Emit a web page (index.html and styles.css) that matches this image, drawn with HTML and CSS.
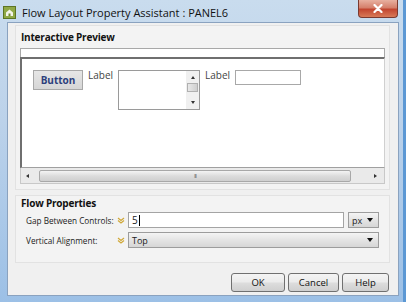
FILE: index.html
```html
<!DOCTYPE html>
<html lang="en">
<head>
  <meta charset="UTF-8">
  <title>Flow Layout Property Assistant : PANEL6</title>
  <link rel="stylesheet" href="styles.css">
</head>
<body>
  <div class="window">
    <div class="titlebar">
      <svg class="app-icon" width="13" height="13" viewBox="0 0 13 13">
        <rect x="0.5" y="0.5" width="12" height="12" fill="#8fa845" stroke="#5c7424"/>
        <path d="M3 10 V6.5 L6.5 3.5 L10 6.5 V10 Z" fill="#f4f4e8"/>
        <rect x="5.5" y="7.5" width="2" height="2.5" fill="#6f8a30"/>
      </svg>
      <span class="title">Flow Layout Property Assistant : PANEL6</span>
      <div class="close-btn">
        <svg width="10" height="9" viewBox="0 0 10 9">
          <path d="M1.5 1 L8.5 8 M8.5 1 L1.5 8" stroke="#fff" stroke-width="2.2" stroke-linecap="round"/>
        </svg>
      </div>
    </div>

    <div class="client">
      <div class="group preview-group">
        <div class="group-title">Interactive Preview</div>
        <div class="strip"></div>
        <div class="preview">
          <div class="fake-button">Button</div>
          <span class="fake-label">Label</span>
          <div class="listbox">
            <div class="vscroll">
              <span class="arrow up"></span>
              <span class="vthumb"></span>
              <span class="arrow down"></span>
            </div>
          </div>
          <span class="fake-label">Label</span>
          <div class="fake-text"></div>
        </div>
        <div class="hscroll">
          <span class="harrow left"></span>
          <div class="hthumb"><span class="grip">III</span></div>
          <span class="harrow right"></span>
        </div>
      </div>

      <div class="group props-group">
        <div class="group-title">Flow Properties</div>
        <div class="prop-row">
          <span class="prop-label">Gap Between Controls:</span>
          <svg class="chev" width="8" height="7" viewBox="0 0 8 7">
            <path d="M1 1 L4 3.5 L7 1 M1 3.5 L4 6 L7 3.5" fill="none" stroke="#d0a838" stroke-width="1.2"/>
          </svg>
          <div class="text-field">5<span class="caret"></span></div>
          <div class="combo unit">px<span class="drop"></span></div>
        </div>
        <div class="prop-row">
          <span class="prop-label">Vertical Alignment:</span>
          <svg class="chev" width="8" height="7" viewBox="0 0 8 7">
            <path d="M1 1 L4 3.5 L7 1 M1 3.5 L4 6 L7 3.5" fill="none" stroke="#d0a838" stroke-width="1.2"/>
          </svg>
          <div class="combo wide">Top<span class="drop"></span></div>
        </div>
      </div>

      <div class="actions">
        <button class="dlg-btn ok">OK</button>
        <button class="dlg-btn cancel">Cancel</button>
        <button class="dlg-btn help">Help</button>
      </div>
    </div>
  </div>
</body>
</html>
```

FILE: styles.css
```css
/* Dialog frame */
body {
  margin: 0;
  font-family: 'Open Sans', 'Noto Sans', sans-serif;
  font-size: 10px;
  color: #222;
}

.window {
  width: 406px;
  height: 302px;
  background: linear-gradient(180deg, #c9dcee 0%, #bcd2ea 40%, #9cc0e6 100%);
  box-sizing: border-box;
  border-right: 3px solid #5c98d4;
  overflow: hidden;
}

.titlebar {
  height: 22px;
  display: flex;
  align-items: center;
  padding-left: 3px;
}

.app-icon {
  margin-top: 3px;
}

.title {
  margin-left: 6px;
  margin-top: 3px;
  font-size: 11px;
  color: #111;
}

.close-btn {
  margin-left: auto;
  margin-right: 5px;
  align-self: flex-start;
  width: 40px;
  height: 18px;
  box-sizing: border-box;
  border: 1px solid #7a3a30;
  border-top: none;
  border-radius: 0 0 4px 4px;
  background: linear-gradient(180deg, #e8b0a0 0%, #d5806c 45%, #c24630 55%, #d87a58 100%);
  display: flex;
  align-items: center;
  justify-content: center;
}

.client {
  margin-left: 7px;
  width: 392px;
  height: 274px;
  box-sizing: border-box;
  background: #f0f0f0;
  border: 1px solid #8aa2bf;
  padding: 2px 8px 0 7px;
  display: flex;
  flex-direction: column;
}

/* Group boxes */
.group {
  width: 375px;
  box-sizing: border-box;
  border: 1px solid #e2e2e2;
  background: #f3f3f3;
  padding: 0 4px;
}

.group-title {
  font-weight: bold;
  color: #111;
  height: 22px;
  line-height: 23px;
  padding-left: 1px;
  letter-spacing: -0.2px;
}

.preview-group {
  height: 165px;
}

.strip {
  height: 8px;
  background: #fff;
  border: 1px solid #a8a8a8;
  border-bottom: none;
}

.preview {
  height: 111px;
  box-sizing: border-box;
  background: #fff;
  border-top: 2px solid #6f6f6f;
  border-left: 2px solid #6f6f6f;
  border-right: 1px solid #d0d0d0;
  border-bottom: 1px solid #a0a0a0;
  padding: 11px 11px;
  display: flex;
  align-items: flex-start;
  gap: 5px;
}

.fake-button {
  width: 50px;
  height: 20px;
  box-sizing: border-box;
  border: 1px solid #a8a8a8;
  background: linear-gradient(180deg, #e6e6e6, #d6d6d6);
  color: #2d3f7c;
  font-weight: bold;
  font-size: 10px;
  display: flex;
  align-items: center;
  justify-content: center;
}

.fake-label {
  color: #444;
  line-height: 12px;
  margin-top: -1px;
}

.listbox {
  width: 82px;
  height: 40px;
  box-sizing: border-box;
  border: 1px solid #9a9a9a;
  display: flex;
  justify-content: flex-end;
}

.vscroll {
  width: 13px;
  background: #f0f0f0;
  display: flex;
  flex-direction: column;
  align-items: center;
}

.arrow {
  width: 0;
  height: 0;
  border-left: 2px solid transparent;
  border-right: 2px solid transparent;
}

.arrow.up {
  border-bottom: 3px solid #333;
  margin-top: 5px;
}

.arrow.down {
  border-top: 3px solid #333;
  margin-top: auto;
  margin-bottom: 5px;
}

.vthumb {
  width: 11px;
  height: 9px;
  margin-top: 4px;
  border: 1px solid #b0b0b0;
  box-sizing: border-box;
  background: linear-gradient(90deg, #e8e8e8, #cfcfcf);
}

.fake-text {
  width: 66px;
  height: 15px;
  box-sizing: border-box;
  border: 1px solid #a8a8a8;
  background: #fff;
}

.hscroll {
  height: 16px;
  box-sizing: border-box;
  border: 1px solid #c8c8c8;
  border-top: none;
  background: #eaeaea;
  display: flex;
  align-items: center;
  padding: 0 2px;
}

.harrow {
  width: 0;
  height: 0;
  border-top: 2px solid transparent;
  border-bottom: 2px solid transparent;
}

.harrow.left {
  border-right: 3px solid #333;
  margin: 0 10px 0 3px;
}

.harrow.right {
  border-left: 3px solid #333;
  margin: 0 5px 0 auto;
}

.hthumb {
  width: 312px;
  height: 12px;
  box-sizing: border-box;
  border: 1px solid #a8a8a8;
  border-radius: 2px;
  background: linear-gradient(180deg, #f4f4f4, #dcdcdc 50%, #cfcfcf);
  display: flex;
  align-items: center;
  justify-content: center;
}

.grip {
  font-size: 6px;
  letter-spacing: -1px;
  color: #666;
}

.props-group {
  margin-top: 5px;
  height: 68px;
}

.props-group .group-title {
  height: 16px;
  line-height: 15px;
}

.prop-row {
  display: flex;
  align-items: center;
  height: 16px;
  margin-bottom: 4px;
  padding-left: 6px;
}

.prop-label {
  width: 91px;
  font-size: 8.2px;
  white-space: nowrap;
  color: #222;
}

.chev {
  margin-right: 3px;
}

.text-field {
  width: 216px;
  height: 16px;
  box-sizing: border-box;
  border: 1px solid #a4a4a4;
  background: #fff;
  padding-left: 3px;
  display: flex;
  align-items: center;
  font-size: 10px;
}

.caret {
  width: 1px;
  height: 11px;
  background: #000;
  margin-left: 1px;
}

.combo {
  height: 16px;
  box-sizing: border-box;
  border: 1px solid #9c9c9c;
  background: linear-gradient(180deg, #f4f4f4, #e4e4e4 50%, #d6d6d6);
  display: flex;
  align-items: center;
  padding: 0 5px 0 3px;
  font-size: 9px;
}

.combo.unit {
  width: 31px;
  margin-left: 4px;
}

.combo.wide {
  width: 251px;
}

.drop {
  margin-left: auto;
  width: 0;
  height: 0;
  border-left: 3px solid transparent;
  border-right: 3px solid transparent;
  border-top: 4px solid #111;
}

/* Dialog buttons */
.actions {
  display: flex;
  justify-content: flex-end;
  gap: 3px;
  margin-top: 10px;
  padding-right: 1px;
}

.dlg-btn {
  height: 19px;
  box-sizing: border-box;
  border: 1px solid #707070;
  border-radius: 3px;
  background: linear-gradient(180deg, #f4f4f4 0%, #ebebeb 48%, #dddddd 52%, #cfcfcf 100%);
  font-family: inherit;
  font-size: 9.5px;
  color: #111;
  padding: 0;
}

.ok {
  width: 54px;
}

.cancel {
  width: 51px;
}

.help {
  width: 47px;
}
```
